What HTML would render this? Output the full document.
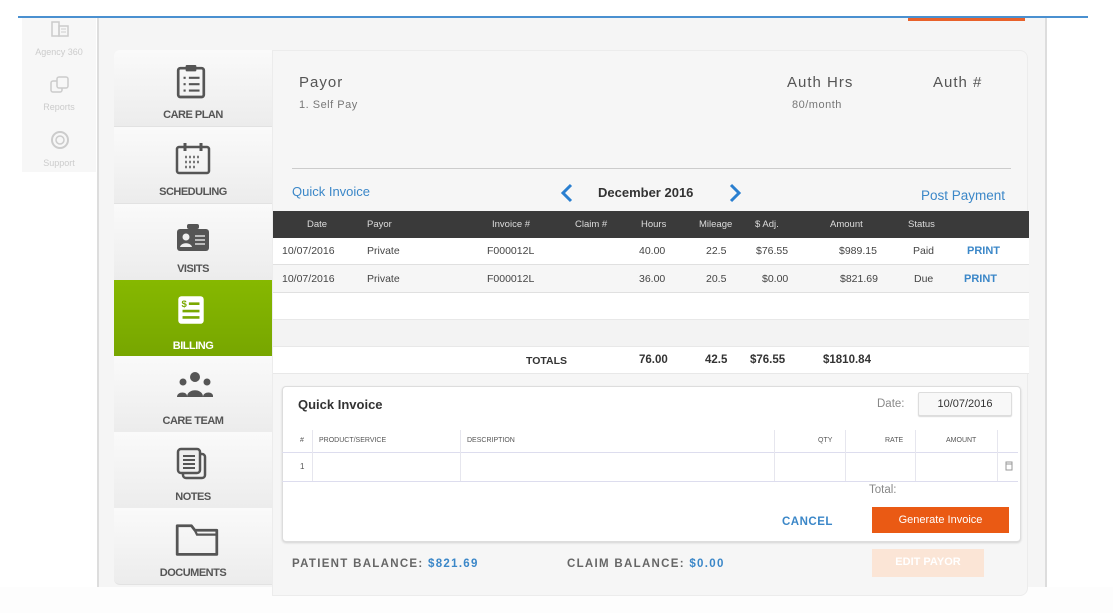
<!DOCTYPE html>
<html><head><style>
*{margin:0;padding:0;box-sizing:border-box}
body{width:1113px;height:613px;background:#fff;position:relative;overflow:hidden;font-family:"Liberation Sans",sans-serif;color:#333}
.a{position:absolute;white-space:nowrap}
.nav{position:absolute;left:114px;width:158px;height:77px;background:linear-gradient(#fafafa,#ececec);border-bottom:1px solid #e2e2e2;text-align:center;font-size:11px;font-weight:bold;color:#555;letter-spacing:-0.5px}
.nav span{position:absolute;left:0;right:0;bottom:5px}
.nav svg{position:absolute;left:61px;top:12px}
.th{font-size:9.5px;color:#ddd}
.td{font-size:10.5px;color:#444}
.b{font-weight:bold}
.blue{color:#3b87c8}
.sb{position:absolute;left:22px;width:74px;text-align:center;font-size:9px;color:#ccc}
</style></head><body>
<!-- main background -->
<div class="a" style="left:97px;top:18px;width:2px;height:569px;background:#ddd"></div>
<div class="a" style="left:99px;top:18px;width:946px;height:569px;background:#f5f5f5"></div>
<div class="a" style="left:1045px;top:18px;width:2px;height:569px;background:#ddd"></div>
<div class="a" style="left:0;top:587px;width:1113px;height:26px;background:#fdfdfd"></div>
<!-- top line -->
<div class="a" style="left:18px;top:16px;width:1070px;height:2px;background:#4a90d0"></div>
<div class="a" style="left:908px;top:18px;width:117px;height:3px;background:#e8612a"></div>
<!-- left faint sidebar -->
<div class="a" style="left:22px;top:18px;width:74px;height:154px;background:#f7f7f7"></div>
<svg class="a" style="left:50px;top:20px" width="20" height="18" viewBox="0 0 20 18"><rect x="2" y="2" width="7" height="14" fill="none" stroke="#ccc" stroke-width="1.5"/><rect x="9" y="6" width="9" height="10" fill="none" stroke="#ccc" stroke-width="1.5"/><path d="M11 9h5M11 12h5" stroke="#ccc"/></svg>
<div class="sb" style="top:47px">Agency 360</div>
<svg class="a" style="left:49px;top:75px" width="22" height="20" viewBox="0 0 22 20"><rect x="2" y="6" width="11" height="11" rx="2" fill="none" stroke="#ccc" stroke-width="1.5"/><rect x="8" y="2" width="11" height="11" rx="2" fill="#f7f7f7" stroke="#ccc" stroke-width="1.5"/></svg>
<div class="sb" style="top:102px">Reports</div>
<svg class="a" style="left:49px;top:129px" width="22" height="22" viewBox="0 0 22 22"><circle cx="11" cy="11" r="8" fill="none" stroke="#ccc" stroke-width="2"/><circle cx="11" cy="11" r="4" fill="none" stroke="#ccc" stroke-width="1.5"/></svg>
<div class="sb" style="top:158px">Support</div>
<!-- nav -->
<div class="nav" style="top:50px;border-radius:6px 0 0 0"><svg width="32" height="38" viewBox="0 0 30 34"><rect x="3" y="5" width="24" height="27" rx="2" fill="none" stroke="#555" stroke-width="2.5"/><rect x="10" y="2" width="10" height="6" rx="1" fill="#555"/><path d="M8 14h2M13 14h10M8 20h2M13 20h10M8 26h2M13 26h10" stroke="#555" stroke-width="2"/></svg><span>CARE PLAN</span></div>
<div class="nav" style="top:127px"><svg width="36" height="38" viewBox="0 0 36 34"><rect x="2" y="6" width="32" height="26" rx="2" fill="none" stroke="#555" stroke-width="2.5"/><path d="M10 2v8M26 2v8" stroke="#555" stroke-width="3"/><path d="M10 16h16M10 21h16M10 26h10" stroke="#777" stroke-width="2.5" stroke-dasharray="2 2"/></svg><span>SCHEDULING</span></div>
<div class="nav" style="top:204px"><svg width="36" height="38" viewBox="0 0 36 34"><rect x="12" y="6" width="12" height="5" rx="2" fill="#555"/><rect x="2" y="11" width="32" height="22" rx="3" fill="#555"/><circle cx="11" cy="19" r="3.5" fill="#eee"/><path d="M5 29c1-5 11-5 12 0z" fill="#eee"/><path d="M20 18h10M20 22h10M20 26h10" stroke="#bbb" stroke-width="2"/></svg><span>VISITS</span></div>
<div class="nav" style="top:280px;background:linear-gradient(#86b800,#77a600);color:#fff;border:none"><svg width="32" height="36" viewBox="0 0 30 34"><rect x="3" y="4" width="24" height="26" rx="3" fill="#fff"/><path d="M13 11h10M7 18h16M7 24h16" stroke="#7aa800" stroke-width="2.5"/><text x="6" y="14" font-size="9" fill="#7aa800" font-weight="bold" font-family="Liberation Sans">$</text></svg><span>BILLING</span></div>
<div class="nav" style="top:356px"><svg width="40" height="36" viewBox="0 0 40 34"><circle cx="20" cy="8" r="5" fill="#555"/><circle cx="8" cy="13" r="3.5" fill="#555"/><circle cx="32" cy="13" r="3.5" fill="#555"/><path d="M12 28c0-9 16-9 16 0z M2 28c0-6 11-6 10 0z M28 28c0-6 11-6 10 0z" fill="#555"/></svg><span>CARE TEAM</span></div>
<div class="nav" style="top:432px"><svg width="34" height="38" viewBox="0 0 34 34"><rect x="8" y="8" width="22" height="24" rx="3" fill="none" stroke="#555" stroke-width="2.5"/><rect x="3" y="3" width="22" height="24" rx="3" fill="#eee" stroke="#555" stroke-width="2.5"/><path d="M8 10h12M8 14h12M8 18h12M8 22h12" stroke="#555" stroke-width="2"/></svg><span>NOTES</span></div>
<div class="nav" style="top:508px;border-radius:0 0 0 6px"><svg width="44" height="38" viewBox="0 0 40 34"><path d="M2 5h13l3 4h20v22H2z" fill="none" stroke="#555" stroke-width="2.5" stroke-linejoin="round"/><path d="M18 9l2 4h18" fill="none" stroke="#555" stroke-width="2"/></svg><span>DOCUMENTS</span></div>
<!-- content panel -->
<div class="a" style="left:272px;top:50px;width:756px;height:546px;background:#f6f6f6;border-radius:0 8px 8px 0;border:1px solid #ececec"></div>
<div class="a" style="left:299px;top:74px;font-size:15px;color:#555;letter-spacing:1px">Payor</div>
<div class="a" style="left:299px;top:99px;font-size:11px;color:#777;letter-spacing:.5px">1. Self Pay</div>
<div class="a" style="left:787px;top:74px;font-size:15px;color:#555;letter-spacing:1px">Auth Hrs</div>
<div class="a" style="left:792px;top:99px;font-size:11px;color:#777;letter-spacing:.5px">80/month</div>
<div class="a" style="left:933px;top:74px;font-size:15px;color:#555;letter-spacing:1px">Auth #</div>
<div class="a" style="left:292px;top:168px;width:719px;height:1px;background:#ccc"></div>
<div class="a blue" style="left:292px;top:184px;font-size:13px">Quick Invoice</div>
<svg class="a" style="left:560px;top:183px" width="14" height="20" viewBox="0 0 14 20"><path d="M11 2L3 10l8 8" fill="none" stroke="#2a7fd0" stroke-width="3"/></svg>
<div class="a b" style="left:598px;top:185px;font-size:13px;color:#333">December 2016</div>
<svg class="a" style="left:728px;top:183px" width="14" height="20" viewBox="0 0 14 20"><path d="M3 2l8 8-8 8" fill="none" stroke="#2a7fd0" stroke-width="3"/></svg>
<div class="a blue" style="left:921px;top:188px;font-size:13.5px">Post Payment</div>
<!-- table -->
<div class="a" style="left:273px;top:211px;width:756px;height:27px;background:#3a3a3a"></div>
<div class="a th" style="left:307px;top:219px">Date</div>
<div class="a th" style="left:367px;top:219px">Payor</div>
<div class="a th" style="left:492px;top:219px">Invoice #</div>
<div class="a th" style="left:575px;top:219px">Claim #</div>
<div class="a th" style="left:641px;top:219px">Hours</div>
<div class="a th" style="left:699px;top:219px">Mileage</div>
<div class="a th" style="left:755px;top:219px">$ Adj.</div>
<div class="a th" style="left:830px;top:219px">Amount</div>
<div class="a th" style="left:908px;top:219px">Status</div>
<div class="a" style="left:273px;top:238px;width:756px;height:27px;background:#fff;border-bottom:1px solid #e0e0e0"></div>
<div class="a" style="left:273px;top:265px;width:756px;height:28px;background:#f6f6f6;border-bottom:1px solid #e0e0e0"></div>
<div class="a" style="left:273px;top:293px;width:756px;height:27px;background:#fff;border-bottom:1px solid #e8e8e8"></div>
<div class="a" style="left:273px;top:320px;width:756px;height:27px;background:#f3f3f3;border-bottom:1px solid #e8e8e8"></div>
<div class="a" style="left:273px;top:347px;width:756px;height:27px;background:#fff;border-bottom:1px solid #e8e8e8"></div>
<div class="a td" style="left:282px;top:245px">10/07/2016</div><div class="a td" style="left:367px;top:245px">Private</div><div class="a td" style="left:487px;top:245px">F000012L</div><div class="a td" style="left:639px;top:245px">40.00</div><div class="a td" style="left:706px;top:245px">22.5</div><div class="a td" style="left:756px;top:245px">$76.55</div><div class="a td" style="left:839px;top:245px">$989.15</div><div class="a td" style="left:913px;top:245px">Paid</div><div class="a b blue" style="left:967px;top:245px;font-size:11px">PRINT</div>
<div class="a td" style="left:282px;top:273px">10/07/2016</div><div class="a td" style="left:367px;top:273px">Private</div><div class="a td" style="left:487px;top:273px">F000012L</div><div class="a td" style="left:639px;top:273px">36.00</div><div class="a td" style="left:706px;top:273px">20.5</div><div class="a td" style="left:762px;top:273px">$0.00</div><div class="a td" style="left:840px;top:273px">$821.69</div><div class="a td" style="left:914px;top:273px">Due</div><div class="a b blue" style="left:964px;top:273px;font-size:11px">PRINT</div>
<div class="a b" style="left:526px;top:355px;font-size:10.5px">TOTALS</div>
<div class="a b" style="left:639px;top:354px;font-size:11.5px">76.00</div>
<div class="a b" style="left:705px;top:354px;font-size:11.5px">42.5</div>
<div class="a b" style="left:750px;top:354px;font-size:11.5px">$76.55</div>
<div class="a b" style="left:823px;top:354px;font-size:11.5px">$1810.84</div>
<!-- quick invoice card -->
<div class="a" style="left:282px;top:386px;width:739px;height:156px;background:#fff;border:1px solid #ddd;border-radius:4px;box-shadow:0 1px 2px rgba(0,0,0,.15)"></div>
<div class="a b" style="left:298px;top:397px;font-size:13px;color:#333">Quick Invoice</div>
<div class="a" style="left:877px;top:398px;font-size:11.5px;color:#888">Date:</div>
<div class="a" style="left:918px;top:392px;width:94px;height:24px;background:#f8f8f8;border:1px solid #ddd;border-radius:2px;box-shadow:0 1px 1px rgba(0,0,0,.15);font-size:11px;text-align:center;line-height:22px">10/07/2016</div>
<div class="a" style="left:282px;top:452px;width:736px;height:1px;background:#dde"></div>
<div class="a" style="left:282px;top:481px;width:736px;height:1px;background:#dde"></div>
<div class="a" style="left:312px;top:430px;width:1px;height:51px;background:#e6e6ee"></div>
<div class="a" style="left:460px;top:430px;width:1px;height:51px;background:#e6e6ee"></div>
<div class="a" style="left:774px;top:430px;width:1px;height:51px;background:#e6e6ee"></div>
<div class="a" style="left:845px;top:430px;width:1px;height:51px;background:#e6e6ee"></div>
<div class="a" style="left:915px;top:430px;width:1px;height:51px;background:#e6e6ee"></div>
<div class="a" style="left:997px;top:430px;width:1px;height:51px;background:#e6e6ee"></div>
<div class="a" style="left:300px;top:437px;font-size:7px;color:#555">#</div>
<div class="a" style="left:319px;top:437px;font-size:7px;color:#555">PRODUCT/SERVICE</div>
<div class="a" style="left:467px;top:437px;font-size:7px;color:#555">DESCRIPTION</div>
<div class="a" style="left:818px;top:437px;font-size:7px;color:#555">QTY</div>
<div class="a" style="left:885px;top:437px;font-size:7px;color:#555">RATE</div>
<div class="a" style="left:946px;top:437px;font-size:7px;color:#555">AMOUNT</div>
<div class="a" style="left:300px;top:462px;font-size:8px;color:#555">1</div>
<svg class="a" style="left:1005px;top:461px" width="8" height="10" viewBox="0 0 8 10"><rect x="1" y="1" width="6" height="8" fill="none" stroke="#999"/><path d="M1 3h6" stroke="#999"/></svg>
<div class="a" style="left:869px;top:484px;font-size:11.5px;color:#888">Total:</div>
<div class="a b blue" style="left:782px;top:516px;font-size:11.5px;letter-spacing:.5px">CANCEL</div>
<div class="a" style="left:872px;top:507px;width:137px;height:26px;background:#ea5a14;color:#fff;font-size:11px;text-align:center;line-height:26px">Generate Invoice</div>
<!-- balances -->
<div class="a b" style="left:292px;top:558px;font-size:11.5px;color:#666;letter-spacing:1.3px">PATIENT BALANCE: <span class="blue">$821.69</span></div>
<div class="a b" style="left:567px;top:558px;font-size:11.5px;color:#666;letter-spacing:1.3px">CLAIM BALANCE: <span class="blue">$0.00</span></div>
<div class="a b" style="left:872px;top:549px;width:112px;height:28px;background:#fbe5d6;color:#fff;font-size:11px;text-align:center;line-height:26px">EDIT PAYOR</div>
</body></html>
